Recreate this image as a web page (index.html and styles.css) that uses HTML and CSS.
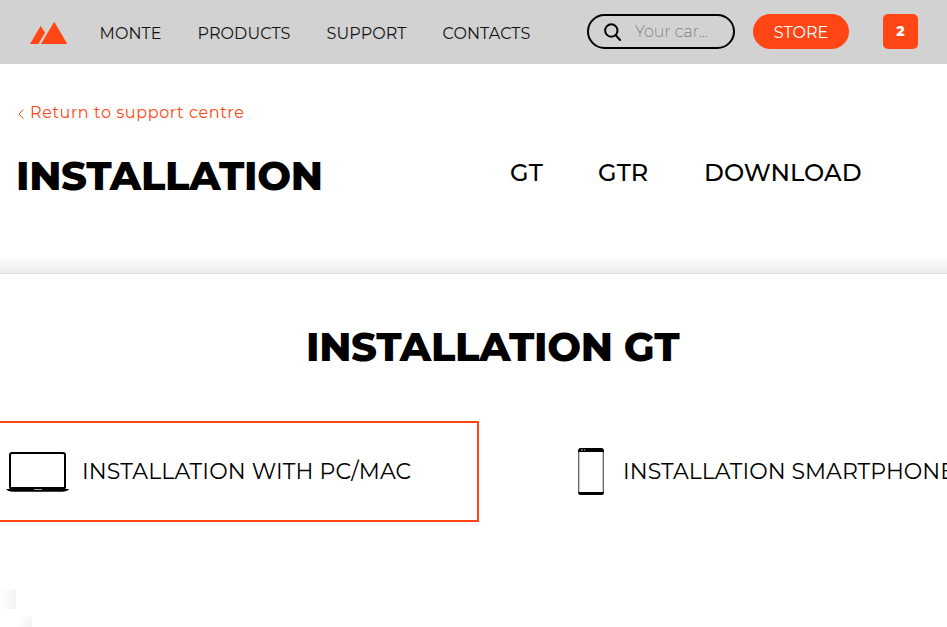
FILE: index.html
```html
<!DOCTYPE html>
<html lang="en">
<head>
<meta charset="utf-8">
<title>Monte – Installation</title>
<link rel="stylesheet" href="styles.css">
</head>
<body>
<header class="topbar">
  <a class="logo" href="#" aria-label="Monte"><svg width="38" height="24" viewBox="0 0 38 24"><path d="M0 23 10.6 5 15 11.6 8.3 23ZM11 23 24.2 0.8 37.3 23Z"/></svg></a>
  <nav class="menu">
    <a class="menu-monte" href="#">MONTE</a>
    <a class="menu-products" href="#">PRODUCTS</a>
    <a class="menu-support" href="#">SUPPORT</a>
    <a class="menu-contacts" href="#">CONTACTS</a>
  </nav>
  <div class="search">
    <svg width="18" height="19" viewBox="0 0 18 19"><circle cx="7.3" cy="7.5" r="6.2"/><path d="M11.6 12 16 17"/></svg>
    <span>Your car...</span>
  </div>
  <a class="store" href="#"><span>STORE</span></a>
  <a class="cart" href="#">2</a>
</header>
<section class="intro">
  <a class="back" href="#"><svg width="6" height="10" viewBox="0 0 6 10"><path d="M5.3 0.5 1 5 5.3 9.5"/></svg><span>Return to support centre</span></a>
  <div class="intro-row">
    <h1>INSTALLATION</h1>
    <nav class="tabs">
      <a class="tab-gt" href="#">GT</a>
      <a class="tab-gtr" href="#">GTR</a>
      <a class="tab-download" href="#">DOWNLOAD</a>
    </nav>
  </div>
</section>
<main>
  <h2>INSTALLATION GT</h2>
  <div class="options">
    <a class="option selected" href="#">
      <svg width="64" height="42" viewBox="0 0 64 42"><rect x="4" y="2" width="55" height="36" rx="2" fill="none" stroke="#000" stroke-width="2"/><path d="M4 36H59V38H63Q61.5 40.8 56 40.8H7Q2 40.8 .2 38H4Z"/><path d="M28 38.5H36" stroke="#aaa"/></svg>
      <span>INSTALLATION WITH PC/MAC</span>
    </a>
    <a class="option phone" href="#">
      <svg width="26" height="47" viewBox="0 0 26 47"><rect x=".75" y=".75" width="24.5" height="45.5" rx="2" fill="none" stroke="#333"/><path d="M2.5 0H23.5Q26 0 26 4H0Q0 0 2.5 0ZM0 44H26Q26 47 23.5 47H2.5Q0 47 0 44Z"/><path d="M3 2H5M6 2H7" stroke="#ccc"/></svg>
      <span>INSTALLATION SMARTPHONE</span>
    </a>
  </div>
</main>
</body>
</html>
```
FILE: styles.css
```css
* { box-sizing: border-box; }
body {
  margin: 0;
  height: 627px;
  overflow: hidden;
  background: #fff;
  color: #000;
  font-family: Montserrat, Inter, "Open Sans", sans-serif;
}
a { color: inherit; text-decoration: none; }
svg { display: block; flex: none; }
h1, h2 { margin: 0; font-weight: 800; font-size: 40px; line-height: 48px; letter-spacing: -.36px; white-space: nowrap; }
.topbar {
  display: flex;
  align-items: flex-start;
  height: 64px;
  padding: 14px 29px 0 30px;
  background: #d2d2d2;
}
.logo { width: 69.5px; padding-top: 7px; fill: #ff4614; }
.menu { display: flex; width: 487.5px; font-size: 16px; font-weight: 400; line-height: 20px; letter-spacing: .1px; padding-top: 10px; color: #111; }
.menu a { white-space: nowrap; }
.menu-monte { width: 98px; }
.menu-products { width: 129px; }
.menu-support { width: 116px; }
.search {
  display: flex;
  width: 148px;
  height: 35px;
  padding: 7px 0 0 15px;
  border: 2px solid #000;
  border-radius: 18px;
  color: #606060;
  font-size: 16px;
  font-weight: 200;
  line-height: 18px;
}
.search svg { fill: none; stroke: #000; stroke-width: 2; stroke-linecap: round; }
.search span { margin-left: 13px; }
.store {
  width: 96px;
  height: 35px;
  margin-left: 18px;
  border-radius: 18px;
  background: #ff4614;
  color: #fff;
  font-size: 16px;
  line-height: 37px;
  text-align: center;
}
.cart {
  width: 35px;
  height: 35px;
  margin-left: 34px;
  border-radius: 5px;
  background: #ff4614;
  color: #fff;
  font-size: 14px;
  font-weight: 800;
  line-height: 35px;
  text-align: center;
}
.intro { height: 210px; padding: 37px 16px 0; background: linear-gradient(#fff 0 192px, #ececec 209px, #e2e2e2 209px); }
.back { display: flex; align-items: center; height: 22px; padding-left: 2px; color: #ff4614; font-size: 16px; }
.back svg { margin: 4px 6px 0 0; fill: none; stroke: #ff4614; }
.back span { letter-spacing: .62px; }
.intro-row { display: flex; padding-top: 29px; }
.intro-row h1 { width: 494px; }
.tabs { display: flex; padding-top: 6px; font-size: 24px; font-weight: 500; line-height: 30px; letter-spacing: .1px; }
.tab-gt { width: 88px; }
.tab-gtr { width: 106px; }
main {
  height: 353px;
  padding-top: 49px;
  background:
    linear-gradient(100deg, #fff 10%, #f1f1f1) 0 315px / 16px 20px no-repeat,
    linear-gradient(120deg, #fff 20%, #f3f3f3) 16px 342px / 16px 11px no-repeat,
    #fff;
}
h2 { padding-left: 306px; }
.options { display: flex; padding-top: 50px; }
.option { display: flex; flex: none; align-items: center; height: 101px; font-size: 22px; letter-spacing: .15px; white-space: nowrap; }
.selected { width: 479px; padding-left: 6px; border: 2px solid #ff4614; border-left: 0; }
.selected span { margin-left: 12px; }
.phone { margin-left: 99px; }
.phone span { margin-left: 19px; letter-spacing: .05px; }
```
